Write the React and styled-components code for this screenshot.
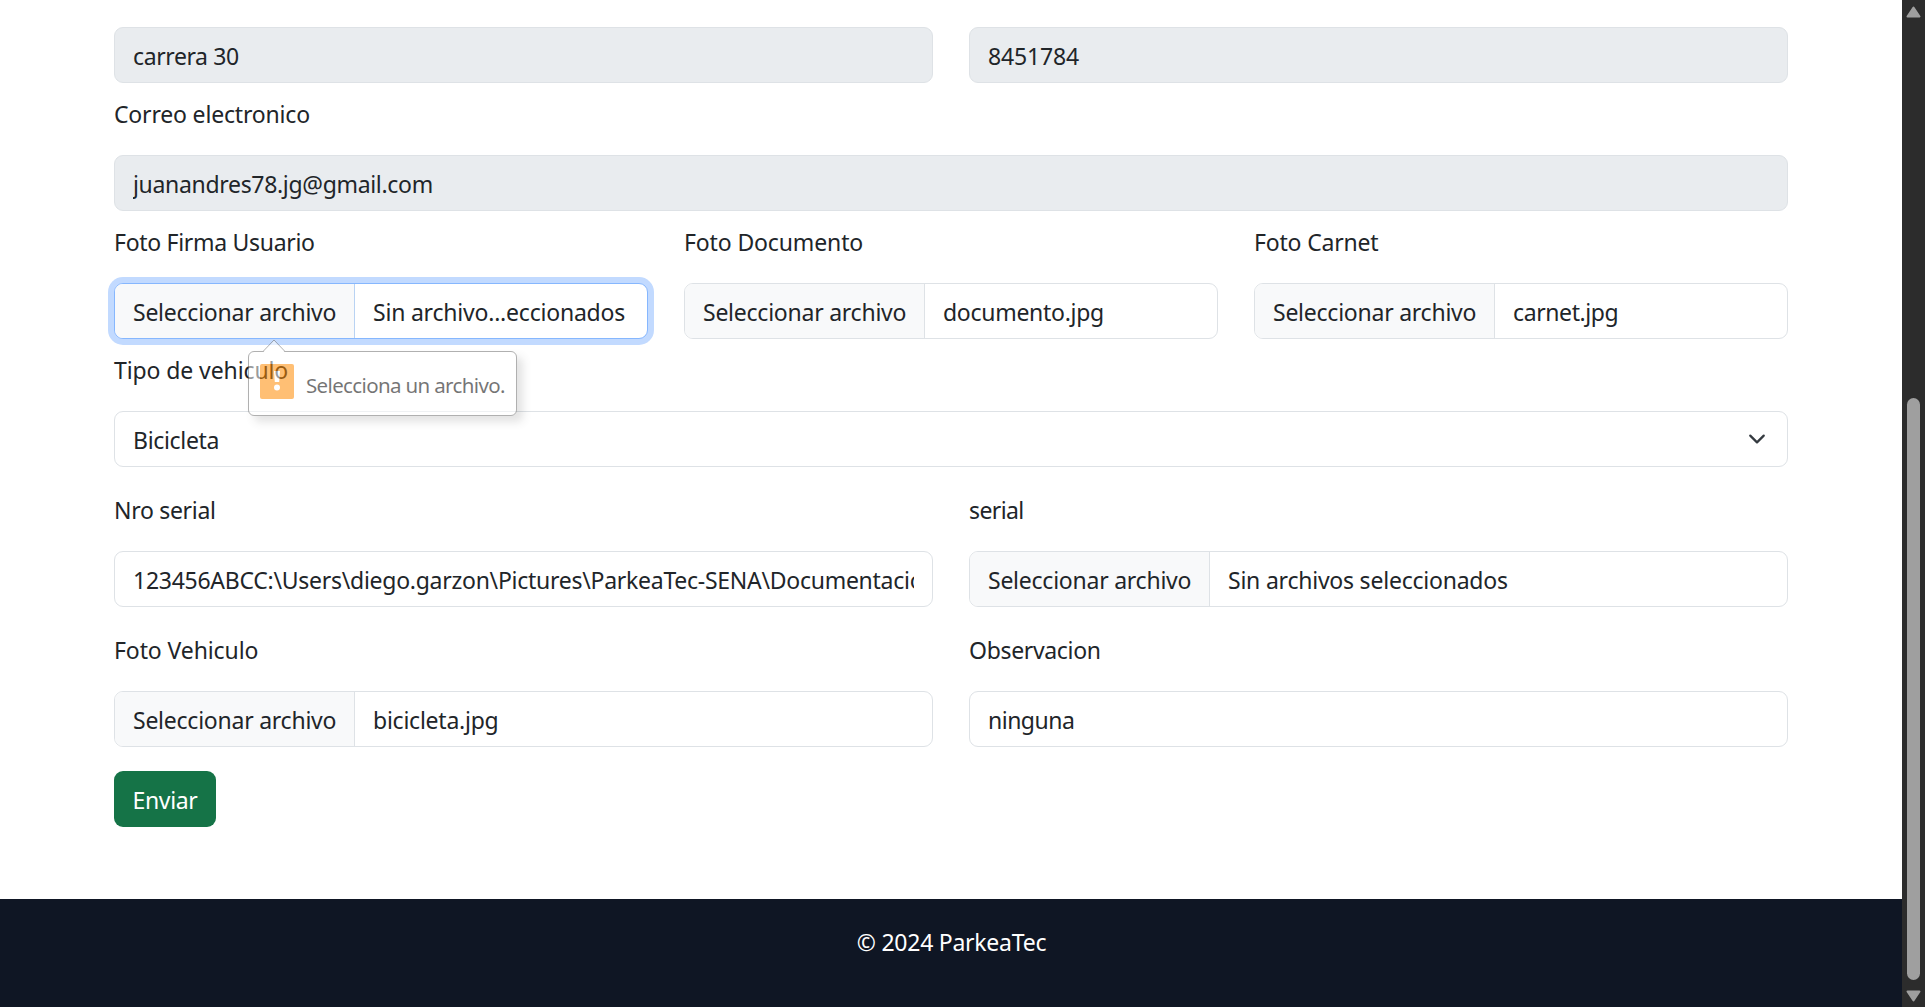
import React from "react";
import styled, { createGlobalStyle, css } from "styled-components";

const Global = createGlobalStyle`
  *, *::before, *::after { box-sizing: border-box; }
  body { margin: 0; background: #fff; overflow: hidden; }
`;

const Viewport = styled.div`
  display: grid;
  grid-template-columns: 1fr 23px;
  height: 1007px;
  overflow: hidden;
  font-family: "Noto Sans", "Open Sans", sans-serif;
  font-size: 23px;
  line-height: 36px;
  color: #212529;
`;

const Page = styled.div`
  display: flex;
  flex-direction: column;
  min-width: 0;
`;

const Form = styled.form`
  display: flex;
  flex-direction: column;
  height: 899px;
  padding: 27px 114px 0;
`;

const Row = styled.div`
  display: grid;
  grid-template-columns: repeat(${(p) => p.$cols || 1}, minmax(0, 1fr));
  column-gap: 36px;
  margin-top: ${(p) => p.$gap || 0}px;
`;

const Field = styled.div`
  display: flex;
  flex-direction: column;
  position: relative;
`;

const Label = styled.label`
  height: 37px;
  padding-top: 1px;
  margin-bottom: 23px;
`;

const Text = styled.span`
  display: inline-block;
  white-space: nowrap;
  letter-spacing: ${(p) => p.$ls || 0}px;
`;

const Control = styled.div`
  display: flex;
  align-items: stretch;
  height: 56px;
  border: 1px solid #dee2e6;
  border-radius: 9px;
  background: ${(p) => (p.$disabled ? "#e9ecef" : "#fff")};
  ${(p) =>
    p.$focus &&
    css`
      border-color: #86b7fe;
      box-shadow: 0 0 0 6px #c2daff;
    `}
`;

const Value = styled.div`
  flex: 1;
  min-width: 0;
  margin: 0 18px;
  padding-top: 10px;
  overflow: hidden;
  white-space: nowrap;
`;

const FileButton = styled.div`
  width: 240px;
  flex: none;
  padding: 10px 0 0 18px;
  background: #f8f9fa;
  border-right: 1px solid ${(p) => (p.$focus ? "#b9d3f3" : "#dee2e6")};
  border-radius: 8px 0 0 8px;
`;

const Chevron = styled.svg`
  width: 18px;
  height: 18px;
  flex: none;
  margin: 18px 21px 0 0;
`;

const Submit = styled.button`
  align-self: flex-start;
  width: 102px;
  height: 56px;
  margin-top: 24px;
  padding: 2px 0 0;
  border: 0;
  border-radius: 9px;
  background: #157347;
  color: #fff;
  font: inherit;
`;

const Footer = styled.footer`
  flex: 1;
  padding: 25px 0 0 1px;
  background: #0f1624;
  color: #fff;
  text-align: center;
`;

const Bubble = styled.div`
  position: absolute;
  z-index: 2;
  left: 134px;
  top: 128px;
  width: 269px;
  height: 65px;
  display: flex;
  align-items: flex-start;
  gap: 12px;
  padding: 12px 11px;
  border: 1px solid #6f6f6f;
  border-radius: 6px;
  background: #fff;
  box-shadow: 6px 6px 8px rgba(0, 0, 0, 0.2);
  opacity: 0.54;
  font-size: 20.5px;
  color: #000;
`;

const Arrow = styled.svg`
  position: absolute;
  left: 13px;
  top: -13px;
  width: 24px;
  height: 14px;
`;

const Warning = styled.svg`
  width: 34px;
  height: 35px;
  flex: none;
`;

const BubbleText = styled.span`
  padding-top: 3px;
`;

const Scrollbar = styled.div`
  display: flex;
  flex-direction: column;
  align-items: center;
  background: #2c2c2c;
`;

const ScrollArrow = styled.svg`
  width: 15px;
  height: 12px;
  margin-top: ${(p) => p.$top}px;
`;

const Thumb = styled.div`
  width: 13px;
  height: 582px;
  margin-top: 380px;
  border-radius: 7px;
  background: #9f9f9f;
`;

function Input({ label, value, ls, disabled }) {
  return (
    <Field>
      {label && <Label><Text $ls={label[1]}>{label[0]}</Text></Label>}
      <Control $disabled={disabled}>
        <Value><Text $ls={ls}>{value}</Text></Value>
      </Control>
    </Field>
  );
}

function FileInput({ label, value, ls, focus, children }) {
  return (
    <Field>
      <Label><Text $ls={label[1]}>{label[0]}</Text></Label>
      <Control $focus={focus}>
        <FileButton $focus={focus}><Text $ls={-0.24}>Seleccionar archivo</Text></FileButton>
        <Value><Text $ls={ls}>{value}</Text></Value>
      </Control>
      {children}
    </Field>
  );
}

function ValidationBubble() {
  return (
    <Bubble>
      <Arrow viewBox="0 0 24 14">
        <path d="M0.5 14L12 1L23.5 14Z" fill="#fff" />
        <path d="M0.5 13L12 1L23.5 13" fill="none" stroke="#6f6f6f" />
      </Arrow>
      <Warning viewBox="0 0 34 35">
        <rect width="34" height="35" rx="2" fill="#ff8a00" />
        <path d="M14 7h6l-.8 11h-4.4z" fill="#fff" />
        <circle cx="17" cy="23.5" r="3" fill="#fff" />
      </Warning>
      <BubbleText><Text $ls={-0.64}>Selecciona un archivo.</Text></BubbleText>
    </Bubble>
  );
}

export default function App() {
  return (
    <>
      <Global />
      <Viewport>
        <Page>
          <Form>
            <Row $cols={2}>
              <Input value="carrera 30" ls={-0.4} disabled />
              <Input value="8451784" ls={-0.15} disabled />
            </Row>
            <Row $gap={12}>
              <Input label={["Correo electronico", -0.18]} value="juanandres78.jg@gmail.com" ls={-0.32} disabled />
            </Row>
            <Row $cols={3} $gap={12}>
              <FileInput label={["Foto Firma Usuario", -0.3]} value="Sin archivo...eccionados" ls={-0.21} focus>
                <ValidationBubble />
              </FileInput>
              <FileInput label={["Foto Documento", -0.13]} value="documento.jpg" ls={-0.28} />
              <FileInput label={["Foto Carnet", -0.18]} value="carnet.jpg" ls={-0.4} />
            </Row>
            <Row $gap={12}>
              <Field>
                <Label><Text $ls={-0.1}>Tipo de vehiculo</Text></Label>
                <Control>
                  <Value><Text $ls={-0.32}>Bicicleta</Text></Value>
                  <Chevron viewBox="0 0 16 16">
                    <path d="m2 5 6 6 6-6" fill="none" stroke="#343a40" strokeWidth="2" strokeLinecap="round" strokeLinejoin="round" />
                  </Chevron>
                </Control>
              </Field>
            </Row>
            <Row $cols={2} $gap={24}>
              <Input
                label={["Nro serial", -0.3]}
                value="123456ABCC:\Users\diego.garzon\Pictures\ParkeaTec-SENA\Documentacion"
                ls={-0.265}
              />
              <FileInput label={["serial", -0.6]} value="Sin archivos seleccionados" ls={-0.22} />
            </Row>
            <Row $cols={2} $gap={24}>
              <FileInput label={["Foto Vehiculo", -0.1]} value="bicicleta.jpg" ls={-0.24} />
              <Input label={["Observacion", -0.33]} value="ninguna" ls={-0.5} />
            </Row>
            <Submit type="button"><Text $ls={-0.35}>Enviar</Text></Submit>
          </Form>
          <Footer><Text $ls={-0.25}>© 2024 ParkeaTec</Text></Footer>
        </Page>
        <Scrollbar>
          <ScrollArrow $top={6} viewBox="0 0 15 12">
            <path d="M7.5 1.5L13.5 10.5H1.5Z" fill="#9f9f9f" stroke="#9f9f9f" strokeWidth="2" strokeLinejoin="round" />
          </ScrollArrow>
          <Thumb />
          <ScrollArrow $top={10} viewBox="0 0 15 12">
            <path d="M7.5 10.5L13.5 1.5H1.5Z" fill="#9f9f9f" stroke="#9f9f9f" strokeWidth="2" strokeLinejoin="round" />
          </ScrollArrow>
        </Scrollbar>
      </Viewport>
    </>
  );
}
